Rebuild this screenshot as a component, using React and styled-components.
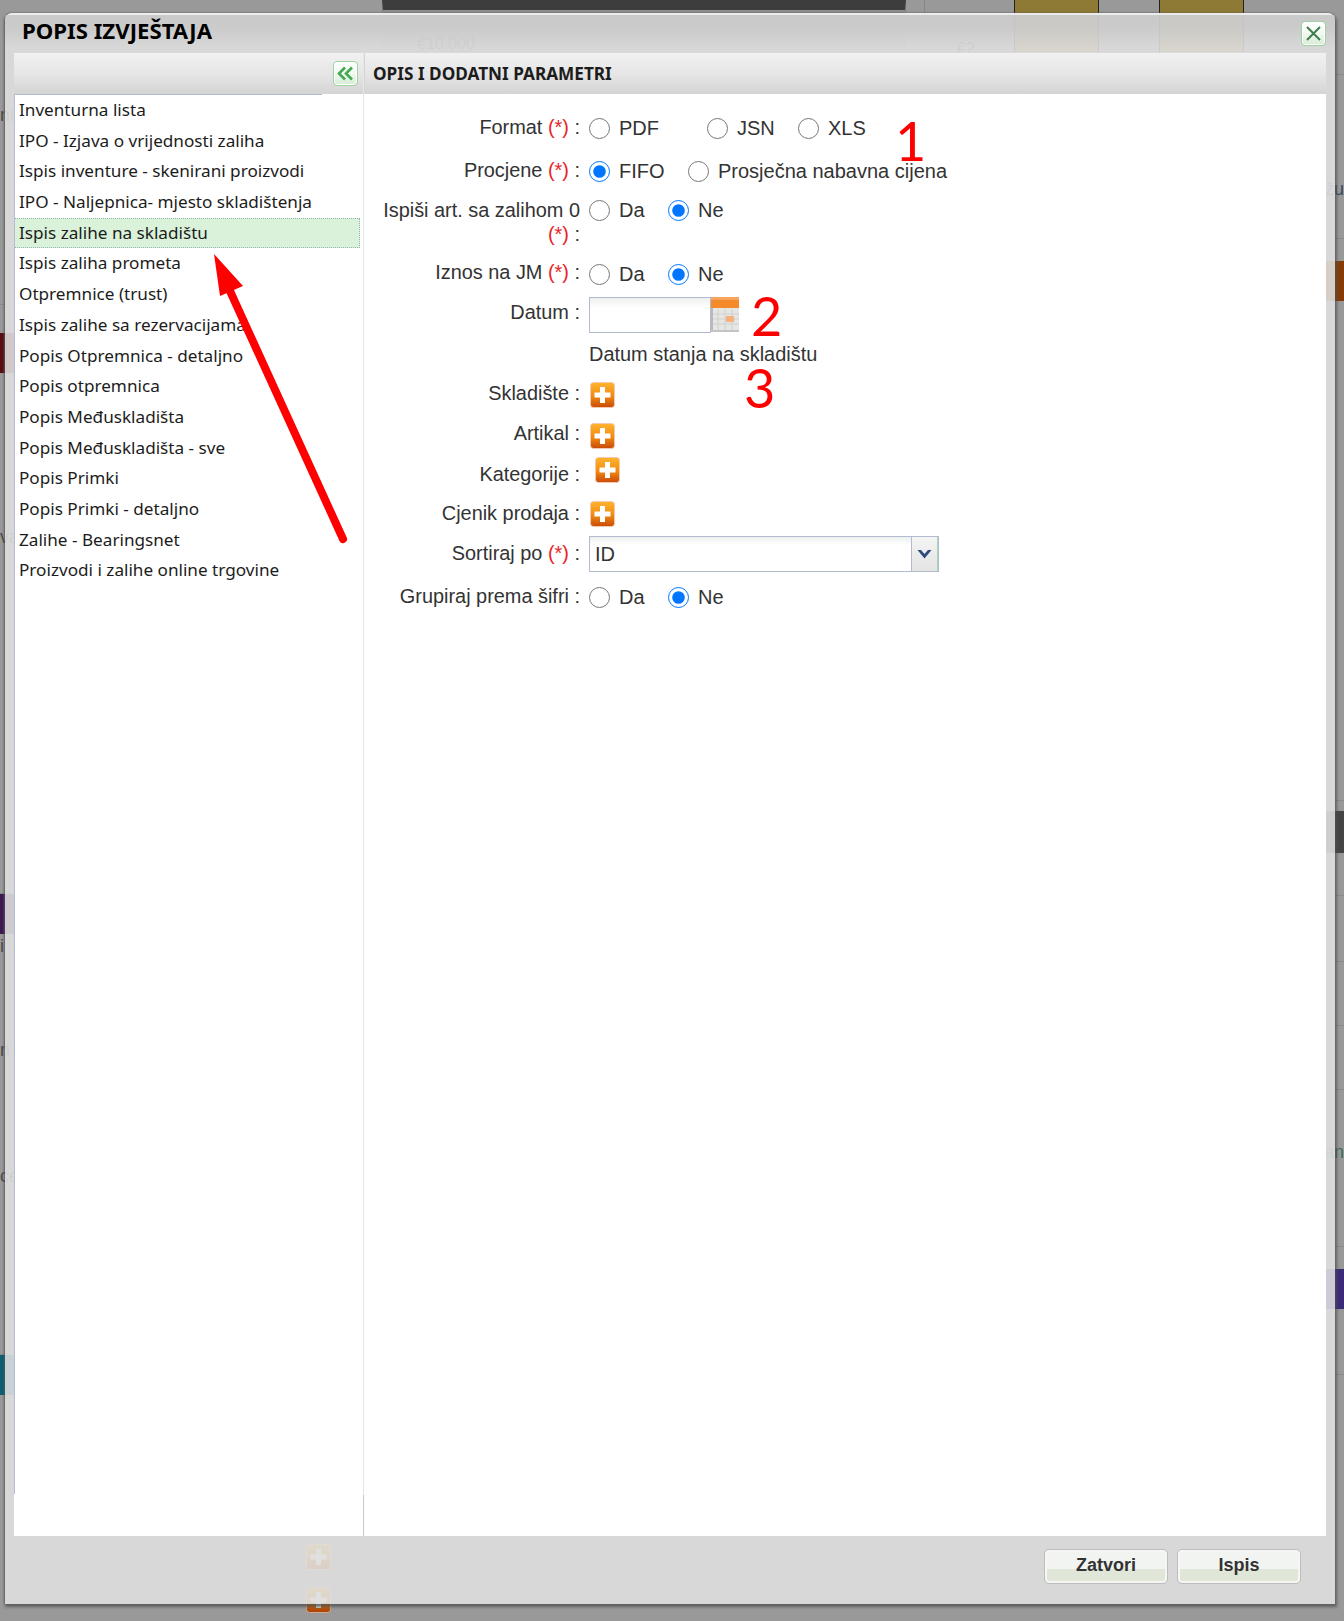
import React from "react";
import styled, { createGlobalStyle } from "styled-components";

const Global = createGlobalStyle`
  html, body { margin: 0; padding: 0; background: #999; }
  * { box-sizing: border-box; }
`;

const Page = styled.div`
  position: relative;
  width: 1344px;
  height: 1621px;
  overflow: hidden;
  background: #999;
  font-family: "Liberation Sans", Arial, sans-serif;
`;

/* ---------- dimmed page behind the dialog ---------- */
const Underlay = styled.div`
  display: grid;
  grid-template-columns: 44px 1fr 44px;
  height: 100%;
`;
const Rail = styled.div`
  display: flex;
  flex-direction: column;
`;
const RailRow = styled.div`
  height: ${(p) => p.$h}px;
  background: ${(p) => p.$bg || "transparent"};
  border-bottom: ${(p) => (p.$line ? "1px solid #8a8a8a" : "none")};
  color: ${(p) => p.$color || "#555"};
  font-size: 18px;
  line-height: ${(p) => p.$h}px;
  text-align: ${(p) => p.$align || "left"};
  white-space: nowrap;
  overflow: hidden;
`;
const Centre = styled.div`
  display: flex;
  flex-direction: column;
  justify-content: space-between;
`;
const TopStrip = styled.div`
  display: flex;
  height: 60px;
  padding-left: 319px;
`;
const ChartBox = styled.div`
  display: flex;
  align-items: flex-start;
  gap: 14px;
  width: 524px;
  height: 60px;
  margin-left: 19px;
  background: #8f8f8f;
  border: 1px solid #858585;
  border-top: 10px solid #3d3d3d;
  padding: 25px 0 0 34px;
  color: #4c4c4c;
  font-size: 16px;
`;
const ChartFrame = styled.div`
  width: 398px;
  height: 30px;
  margin-top: 7px;
  border: 1px solid #7a7a7a;
`;
const Price = styled.div`
  width: 108px;
  padding: 40px 0 0 32px;
  color: #4c4c4c;
  font-size: 16px;
  border-left: 1px solid #868686;
  margin-left: 18px;
`;
const GoldColumn = styled.div`
  width: 85px;
  height: 60px;
  background: #8f7a35;
  border-left: 1px solid #222;
  border-right: 1px solid #222;
  margin-left: ${(p) => p.$gap}px;
`;
const BottomIcons = styled.div`
  display: flex;
  flex-direction: column;
  gap: 17px;
  padding: 0 0 8px 262px;
  filter: brightness(0.85);
`;

/* ---------- dialog ---------- */
const Dialog = styled.div`
  position: absolute;
  left: 5px;
  top: 13px;
  width: 1330px;
  height: 1591px;
  display: flex;
  flex-direction: column;
  background: rgba(224, 224, 224, 0.885);
  border-top: 2px solid rgba(240, 240, 240, 0.85);
  border-radius: 7px 7px 0 0;
  box-shadow: -1px 0 2px rgba(90, 90, 90, 0.75), 1px 2px 3px 1px rgba(80, 80, 80, 0.75);
`;
const TitleBar = styled.div`
  height: 37px;
  flex: none;
  display: flex;
  align-items: center;
  justify-content: space-between;
  padding: 0 9px 6px 17px;
  background: linear-gradient(180deg, rgba(190, 190, 190, 0.55) 0%, rgba(190, 190, 190, 0.5) 35%, rgba(216, 216, 216, 0) 90%);
`;
const Title = styled.div`
  font-family: "Noto Sans", sans-serif;
  font-weight: 700;
  font-size: 22.2px;
  line-height: 30px;
  color: #000;
`;
const IconButton = styled.button`
  width: 25px;
  height: 25px;
  padding: 0;
  display: flex;
  align-items: center;
  justify-content: center;
  border: 1px solid #9ed29e;
  border-radius: 4px;
  background: linear-gradient(180deg, #fff 0%, #f2f8f2 50%, #d5ecd5 100%);
  box-shadow: inset 0 0 0 1px #fff;
`;
const CloseButton = styled(IconButton)`
  margin-top: 6px;
`;
const Body = styled.div`
  flex: 1;
  display: grid;
  grid-template-columns: 350px 1fr;
  margin: 0 9px;
  background: #fff;
`;
const SidePanel = styled.div`
  display: flex;
  flex-direction: column;
  border-right: 1px solid #e6e6e6;
  border-image: linear-gradient(180deg, #e6e6e6 0, #e6e6e6 1442px, #c9c9c9 1442px) 1;
`;
const HeaderBar = styled.div`
  height: 42px;
  flex: none;
  display: flex;
  align-items: center;
  background: linear-gradient(180deg, #f1f1f1 0%, #e6e6e6 50%, #d4d4d4 100%);
  border-top: 1px solid #d9d9d9;
`;
const SideHeader = styled(HeaderBar)`
  justify-content: flex-end;
  padding-right: 5px;
`;
const MainHeader = styled(HeaderBar)`
  padding-left: 8px;
  border-left: 1px solid #d6d6d6;
  font-family: "Noto Sans", sans-serif;
  font-size: 17.2px;
  font-weight: 700;
  color: #1c1c1c;
`;
const ListWrap = styled.div`
  flex: 1;
  padding-right: 3px;
`;
const List = styled.ul`
  list-style: none;
  margin: 0;
  padding: 1px 0 0 0;
  height: 1400px;
  border-left: 1px solid #b4bcd4;
  background: linear-gradient(90deg, #b4bcd4 0, #b4bcd4 307px, transparent 307px) top left / 100% 1px no-repeat;
`;
const ListItem = styled.li`
  height: 30.7px;
  line-height: 28px;
  padding-left: 4px;
  font-family: "Noto Sans", sans-serif;
  font-size: 17.15px;
  color: #1c1c1c;
  white-space: nowrap;
  border: 1px dotted ${(p) => (p.$active ? "#8fb3b0" : "transparent")};
  border-left-width: 0;
  background: ${(p) => (p.$active ? "#d9f2d9" : "transparent")};
`;
const Main = styled.div`
  display: flex;
  flex-direction: column;
`;
const Form = styled.div`
  padding-top: 14px;
`;
const Row = styled.div`
  display: grid;
  grid-template-columns: 216px 1fr;
  column-gap: 9px;
  min-height: ${(p) => p.$h}px;
  align-items: ${(p) => (p.$top ? "start" : "center")};
  padding-top: ${(p) => p.$pt || 0}px;
`;
const Label = styled.div`
  text-align: right;
  font-size: 19.9px;
  line-height: 24px;
  color: #333;
  padding-left: 10px;
  transform: translateY(${(p) => p.$dy || 0}px);
`;
const Req = styled.span`
  color: #e8262a;
`;
const Controls = styled.div`
  display: flex;
  align-items: center;
  min-height: 24px;
  padding-left: ${(p) => p.$pl || 0}px;
  margin-top: ${(p) => p.$mt || 0}px;
  margin-bottom: ${(p) => p.$mb || 0}px;
`;
const RadioLabel = styled.label`
  display: inline-flex;
  align-items: center;
  width: ${(p) => (p.$w ? `${p.$w}px` : "auto")};
  font-size: 20px;
  color: #333;
`;
const Radio = styled.input.attrs({ type: "radio" })`
  width: 21px;
  height: 21px;
  margin: 0 9px 0 0;
  accent-color: #0075ff;
`;
const DateWrap = styled.div`
  display: flex;
`;
const DateInput = styled.div`
  width: 122px;
  height: 36px;
  border: 1px solid #b3bbd2;
  background: linear-gradient(180deg, #eef0f0 0%, #fff 30%);
`;
const Hint = styled.div`
  font-size: 19.95px;
  color: #333;
`;
const Select = styled.div`
  width: 350px;
  height: 36px;
  display: flex;
  border: 1px solid #b3bbd2;
  background: linear-gradient(180deg, #eef0f0 0%, #fff 25%);
`;
const SelectValue = styled.div`
  flex: 1;
  padding-left: 5px;
  font-size: 20px;
  line-height: 34px;
  color: #333;
`;
const SelectArrow = styled.div`
  width: 27px;
  display: flex;
  align-items: center;
  justify-content: center;
  background: linear-gradient(180deg, #f4f4f4, #e4e4e4);
  border-left: 1px solid #b3bbd2;
  border-right: 1px solid #a9d8b0;
`;
const Footer = styled.div`
  height: 68px;
  flex: none;
  display: flex;
  justify-content: flex-end;
  align-items: flex-start;
  gap: 9px;
  padding: 13px 34px 0 0;
`;
const Button = styled.button`
  width: ${(p) => p.$w}px;
  height: 35px;
  padding: 0 0 2px;
  border: 1px solid #bdbdbd;
  border-radius: 5px;
  box-shadow: inset 0 0 0 2px #f6f6f4;
  background: linear-gradient(180deg, #f2f4f1 0%, #f2f4f1 58%, #e0e6d8 58%, #e0e6d8 100%);
  font-family: "Liberation Sans", sans-serif;
  font-weight: 700;
  font-size: 18px;
  color: #333;
`;

/* ---------- annotations on top of the screenshot ---------- */
const Digit = styled.div`
  position: absolute;
  left: ${(p) => p.$x}px;
  top: ${(p) => p.$y}px;
  font-family: Lato, sans-serif;
  font-size: 54px;
  line-height: 54px;
  color: #ff0000;
`;
const ArrowSvg = styled.svg`
  position: absolute;
  left: 0;
  top: 0;
  pointer-events: none;
`;

const reports = [
  "Inventurna lista",
  "IPO - Izjava o vrijednosti zaliha",
  "Ispis inventure - skenirani proizvodi",
  "IPO - Naljepnica- mjesto skladištenja",
  "Ispis zalihe na skladištu",
  "Ispis zaliha prometa",
  "Otpremnice (trust)",
  "Ispis zalihe sa rezervacijama",
  "Popis Otpremnica - detaljno",
  "Popis otpremnica",
  "Popis Međuskladišta",
  "Popis Međuskladišta - sve",
  "Popis Primki",
  "Popis Primki - detaljno",
  "Zalihe - Bearingsnet",
  "Proizvodi i zalihe online trgovine",
];

const PlusIcon = ({ cut }) => (
  <svg width="25" height="26" viewBox="0 0 25 26" style={{ display: "block" }}>
    <defs>
      <linearGradient id={cut ? "pg2" : "pg1"} x1="0" y1="0" x2="0" y2="1">
        <stop offset="0" stopColor="#ffb52e" />
        <stop offset="0.55" stopColor="#f08a12" />
        <stop offset="1" stopColor="#c84a08" />
      </linearGradient>
    </defs>
    <rect x="0.5" y="0.5" width="24" height="25" rx="3" fill={`url(#${cut ? "pg2" : "pg1"})`} stroke="#f4c9ae" />
    <path d="M10 5h5v5.500h5.500v5H15V21h-5v-5.500H4.500v-5H10z" fill="#fff" />
  </svg>
);

const CalendarIcon = () => (
  <svg width="28" height="36" viewBox="0 0 28 36" style={{ display: "block" }}>
    <rect x="0" y="0" width="28" height="11" fill="#f58a2a" />
    <rect x="0" y="0" width="28" height="3" fill="#f7a45e" />
    <rect x="0" y="11" width="28" height="23" fill="#e6e6e4" />
    <rect x="0" y="11" width="2" height="23" fill="#b9b9b9" />
    <rect x="0" y="33" width="28" height="2" fill="#c4c4c4" />
    <path d="M7 12v21M14 12v21M21 12v21M2 17h26M2 22h26M2 27h26" stroke="#cfcfcd" strokeWidth="1" />
    <rect x="15" y="19" width="8" height="6" fill="#f8b07a" />
  </svg>
);

const Radios = ({ name, items, mt }) => (
  <Controls $mt={mt}>
    {items.map((it) => (
      <RadioLabel key={it.t} $w={it.w}>
        <Radio name={name} defaultChecked={!!it.on} />
        {it.t}
      </RadioLabel>
    ))}
  </Controls>
);

const yesNo = (name, mt) => (
  <Radios name={name} mt={mt} items={[{ t: "Da", w: 79 }, { t: "Ne", on: true }]} />
);

const Star = () => <Req>(*)</Req>;

export default function App() {
  return (
    <Page>
      <Global />
      <Underlay>
        <Rail>
          <RailRow $h={95} />
          <RailRow $h={40} $color="#4a4a4a">ni</RailRow>
          <RailRow $h={170} $line />
          <RailRow $h={28} />
          <RailRow $h={40} $bg="#5a0c12" />
          <RailRow $h={150} />
          <RailRow $h={28} $color="#4a4a4a">va</RailRow>
          <RailRow $h={343} $line />
          <RailRow $h={40} $bg="#3b1a52" />
          <RailRow $h={25} $color="#4a4a4a">i</RailRow>
          <RailRow $h={76} />
          <RailRow $h={30} $color="#4a4a4a">n</RailRow>
          <RailRow $h={96} />
          <RailRow $h={30} $color="#4a4a4a">ce</RailRow>
          <RailRow $h={164} $line />
          <RailRow $h={40} $bg="#0a5f72" />
        </Rail>
        <Centre>
          <TopStrip>
            <ChartBox>
              €10.000
              <ChartFrame />
            </ChartBox>
            <Price>€2</Price>
            <GoldColumn $gap={-18} />
            <GoldColumn $gap={60} />
          </TopStrip>
          <BottomIcons>
            <PlusIcon />
            <PlusIcon cut />
          </BottomIcons>
        </Centre>
        <Rail>
          <RailRow $h={75} $line />
          <RailRow $h={100} />
          <RailRow $h={28} $align="right" $color="#3a4a5a">žu</RailRow>
          <RailRow $h={36} $line />
          <RailRow $h={22} />
          <RailRow $h={40} $bg="#863a06" />
          <RailRow $h={500} $line />
          <RailRow $h={10} />
          <RailRow $h={42} $bg="#444" />
          <RailRow $h={43} $line />
          <RailRow $h={66} $line />
          <RailRow $h={64} $line />
          <RailRow $h={64} $line />
          <RailRow $h={48} />
          <RailRow $h={28} $align="right" $color="#3c6a5a">an</RailRow>
          <RailRow $h={81} $line />
          <RailRow $h={22} />
          <RailRow $h={40} $bg="#3a2a78" />
          <RailRow $h={66} $line />
        </Rail>
      </Underlay>

      <Dialog>
        <TitleBar>
          <Title>POPIS IZVJEŠTAJA</Title>
          <CloseButton aria-label="Zatvori">
            <svg width="17" height="17" viewBox="0 0 17 17">
              <path d="M2 2l13 13M15 2L2 15" stroke="#3f7d4c" strokeWidth="2" />
            </svg>
          </CloseButton>
        </TitleBar>
        <Body>
          <SidePanel>
            <SideHeader>
              <IconButton aria-label="Sažmi">
                <svg width="17" height="15" viewBox="0 0 17 15">
                  <path d="M8 1.500L2 7.500l6 6M15 1.500L9 7.500l6 6" fill="none" stroke="#45a94f" strokeWidth="2.6" />
                </svg>
              </IconButton>
            </SideHeader>
            <ListWrap>
              <List>
                {reports.map((r, i) => (
                  <ListItem key={r} $active={i === 4}>{r}</ListItem>
                ))}
              </List>
            </ListWrap>
          </SidePanel>
          <Main>
            <MainHeader>OPIS I DODATNI PARAMETRI</MainHeader>
            <Form>
              <Row $h={40}>
                <Label $dy={-1}>Format <Star /> :</Label>
                <Radios name="format" items={[{ t: "PDF", w: 118 }, { t: "JSN", w: 91 }, { t: "XLS" }]} />
              </Row>
              <Row $h={46}>
                <Label $dy={-1}>Procjene <Star /> :</Label>
                <Radios name="proc" items={[{ t: "FIFO", w: 99, on: true }, { t: "Prosječna nabavna cijena" }]} />
              </Row>
              <Row $h={56} $top $pt={4}>
                <Label>Ispiši art. sa zalihom 0 <Star /> :</Label>
                {yesNo("zal")}
              </Row>
              <Row $h={46}>
                <Label $dy={-1}>Iznos na JM <Star /> :</Label>
                {yesNo("jm", 2)}
              </Row>
              <Row $h={38}>
                <Label $dy={-3}>Datum :</Label>
                <DateWrap>
                  <DateInput />
                  <CalendarIcon />
                </DateWrap>
              </Row>
              <Row $h={40}>
                <span />
                <Hint>Datum stanja na skladištu</Hint>
              </Row>
              <Row $h={40}>
                <Label $dy={-1}>Skladište :</Label>
                <Controls $pl={1} $mt={2}><PlusIcon /></Controls>
              </Row>
              <Row $h={40}>
                <Label $dy={-1}>Artikal :</Label>
                <Controls $pl={1} $mt={4}><PlusIcon /></Controls>
              </Row>
              <Row $h={39}>
                <Label>Kategorije :</Label>
                <Controls $pl={6} $mb={8}><PlusIcon /></Controls>
              </Row>
              <Row $h={41}>
                <Label $dy={-1}>Cjenik prodaja :</Label>
                <Controls $pl={1}><PlusIcon /></Controls>
              </Row>
              <Row $h={40}>
                <Label $dy={-1}>Sortiraj po <Star /> :</Label>
                <Select>
                  <SelectValue>ID</SelectValue>
                  <SelectArrow>
                    <svg width="15" height="10" viewBox="0 0 15 10">
                      <path d="M0.500 1h3.500l3.500 4L11 1h3.500L7.500 9.500z" fill="#2f4a7c" />
                    </svg>
                  </SelectArrow>
                </Select>
              </Row>
              <Row $h={46}>
                <Label $dy={-1}>Grupiraj prema šifri :</Label>
                {yesNo("grp")}
              </Row>
            </Form>
          </Main>
        </Body>
        <Footer>
          <Button $w={124}>Zatvori</Button>
          <Button $w={124}>Ispis</Button>
        </Footer>
      </Dialog>

      <Digit $x={895} $y={114}>1</Digit>
      <Digit $x={751} $y={289}>2</Digit>
      <Digit $x={744} $y={361}>3</Digit>
      <ArrowSvg width="1344" height="1621" viewBox="0 0 1344 1621">
        <path d="M343 539L230 291" stroke="#ff0000" strokeWidth="8" strokeLinecap="round" fill="none" />
        <path d="M214 254L243 286L220 296z" fill="#ff0000" />
      </ArrowSvg>
    </Page>
  );
}
